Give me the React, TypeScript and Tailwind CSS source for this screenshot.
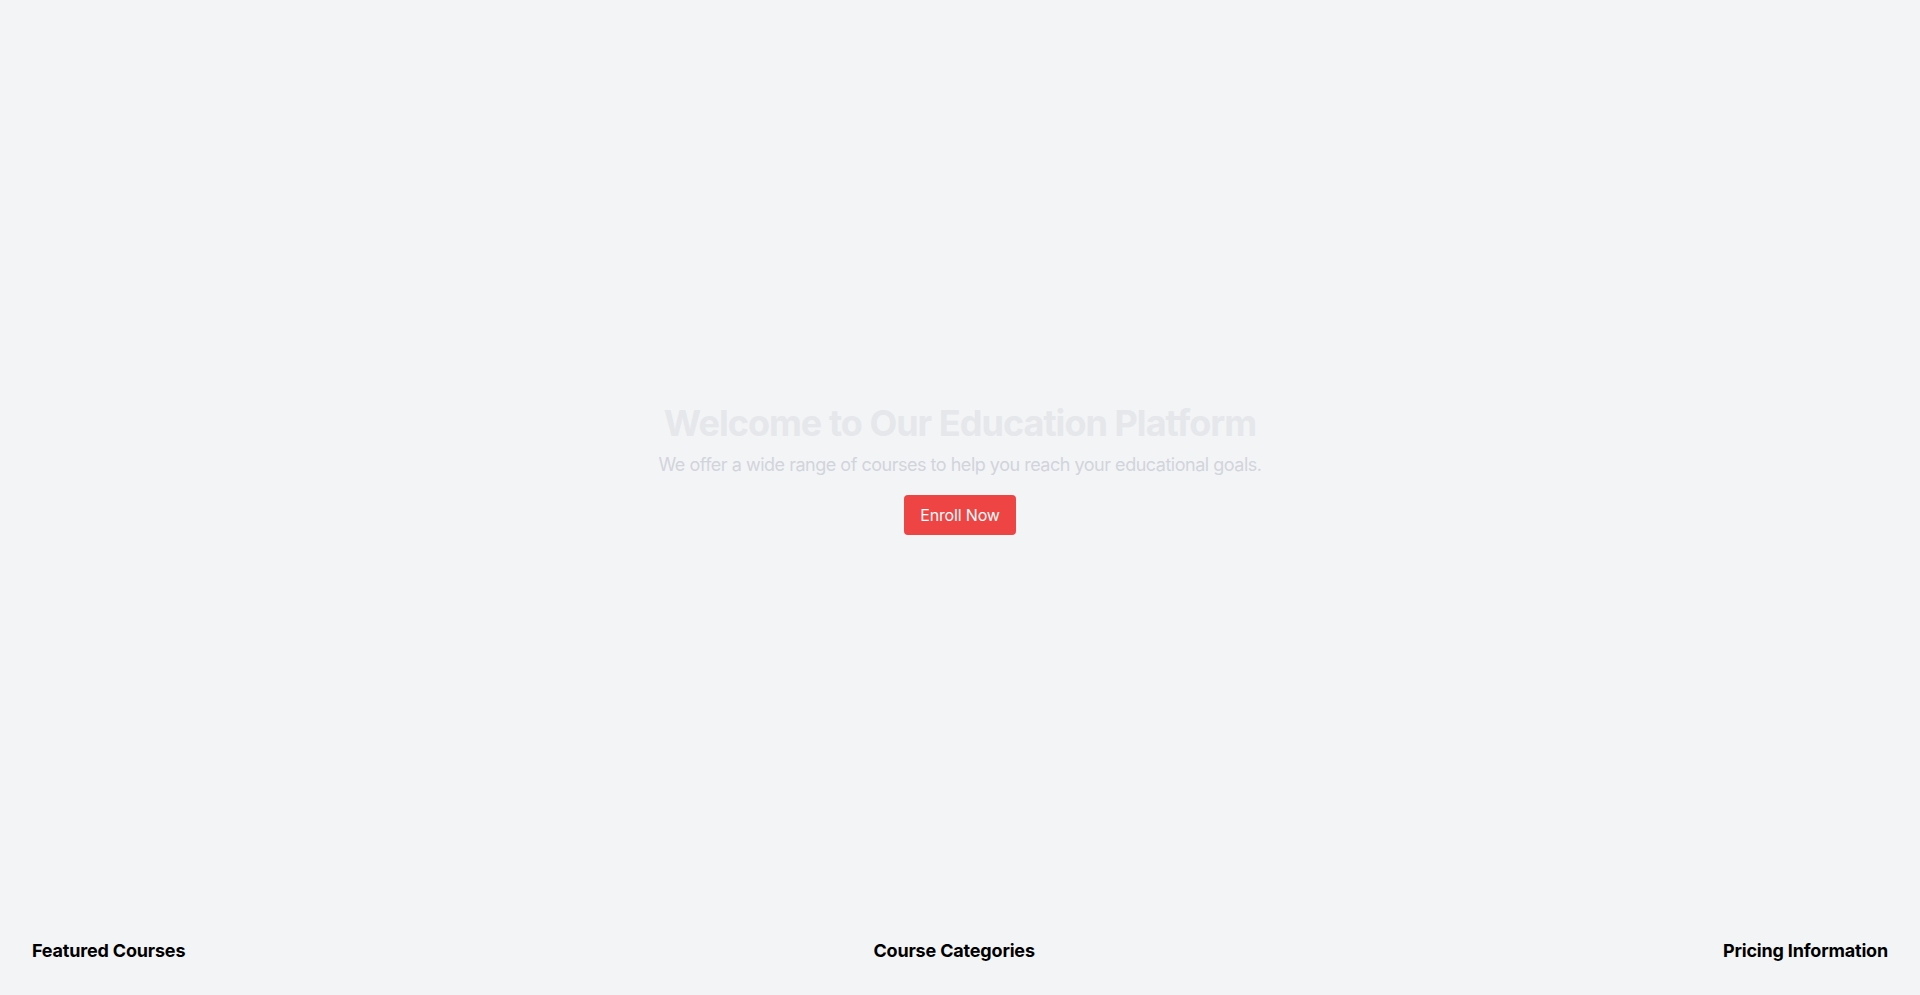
export default function App() {
  return (
    <div
      className="flex h-screen flex-col bg-gray-100 text-black"
      style={{ fontFamily: "Inter, 'Noto Sans', sans-serif" }}
    >
      <section className="flex flex-1 flex-col items-center justify-center text-center">
        <h1 className="mb-2 text-4xl font-bold tracking-[-0.027em] text-[#e5e7eb]">
          Welcome to Our Education Platform
        </h1>
        <p className="text-lg tracking-[-0.027em] text-[#d1d5db]">
          We offer a wide range of courses to help you reach your educational goals.
        </p>
        <button className="mt-4 rounded bg-[#ef4444] px-4 py-2 tracking-[-0.01em] text-white">
          Enroll Now
        </button>
      </section>

      <div className="flex items-center justify-between px-8 pb-[30px]">
        <h2 className="text-lg font-bold tracking-[-0.01em]">Featured Courses</h2>
        <h2 className="text-lg font-bold tracking-[-0.01em]">Course Categories</h2>
        <h2 className="text-lg font-bold tracking-[-0.01em]">Pricing Information</h2>
      </div>
    </div>
  );
}
